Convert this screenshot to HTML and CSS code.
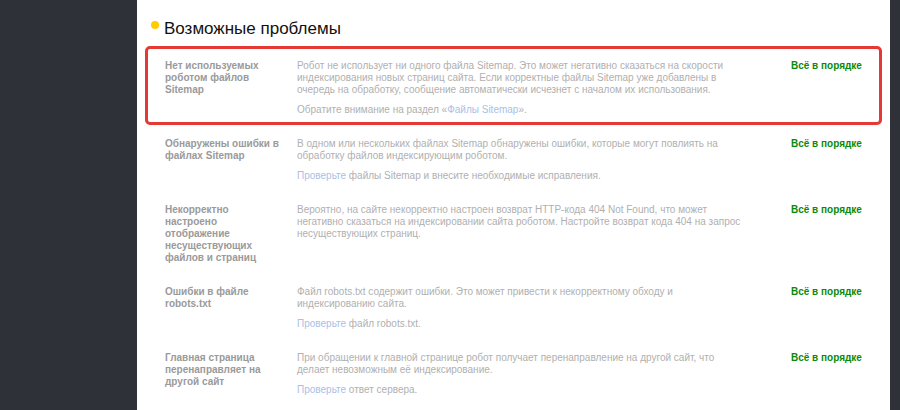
FILE: index.html
```html
<!DOCTYPE html>
<html lang="ru">
<head>
    <meta charset="UTF-8">
    <title>Возможные проблемы</title>
    <link rel="stylesheet" href="styles.css">
</head>
<body>
    <div class="page">
        <div class="panel">
            <h2 class="section-title"><span class="dot"></span>Возможные проблемы</h2>

            <div class="issues">
                <div class="issue issue-marked">
                    <div class="issue-name">Нет используемых роботом файлов Sitemap</div>
                    <div class="issue-text">
                        <p>Робот не использует ни одного файла Sitemap. Это может негативно сказаться на скорости индексирования новых страниц сайта. Если корректные файлы Sitemap уже добавлены в очередь на обработку, сообщение автоматически исчезнет с началом их использования.</p>
                        <p>Обратите внимание на раздел «<a href="#">Файлы Sitemap</a>».</p>
                    </div>
                    <div class="issue-status">Всё в порядке</div>
                </div>

                <div class="issue">
                    <div class="issue-name">Обнаружены ошибки в файлах Sitemap</div>
                    <div class="issue-text">
                        <p>В одном или нескольких файлах Sitemap обнаружены ошибки, которые могут повлиять на обработку файлов индексирующим роботом.</p>
                        <p><a href="#">Проверьте</a> файлы Sitemap и внесите необходимые исправления.</p>
                    </div>
                    <div class="issue-status">Всё в порядке</div>
                </div>

                <div class="issue">
                    <div class="issue-name">Некорректно настроено отображение несуществующих файлов и страниц</div>
                    <div class="issue-text">
                        <p>Вероятно, на сайте некорректно настроен возврат HTTP-кода 404 Not Found, что может негативно сказаться на индексировании сайта роботом. Настройте возврат кода 404 на запрос несуществующих страниц.</p>
                    </div>
                    <div class="issue-status">Всё в порядке</div>
                </div>

                <div class="issue">
                    <div class="issue-name">Ошибки в файле robots.txt</div>
                    <div class="issue-text">
                        <p>Файл robots.txt содержит ошибки. Это может привести к некорректному обходу и индексированию сайта.</p>
                        <p><a href="#">Проверьте</a> файл robots.txt.</p>
                    </div>
                    <div class="issue-status">Всё в порядке</div>
                </div>

                <div class="issue">
                    <div class="issue-name">Главная страница перенаправляет на другой сайт</div>
                    <div class="issue-text">
                        <p>При обращении к главной странице робот получает перенаправление на другой сайт, что делает невозможным её индексирование.</p>
                        <p><a href="#">Проверьте</a> ответ сервера.</p>
                    </div>
                    <div class="issue-status">Всё в порядке</div>
                </div>
            </div>
        </div>
    </div>
</body>
</html>
```

FILE: styles.css
```css
body {
    margin: 0;
    background-color: #2e3238;
    font-family: 'Liberation Sans', Arial, sans-serif;
    overflow: hidden;
}

.page {
    display: flex;
    padding-left: 137px;
    padding-right: 14px;
    height: 410px;
}

.panel {
    flex: 1;
    background-color: #fff;
    padding: 0 8px;
}

.section-title {
    display: flex;
    align-items: flex-start;
    margin: 0;
    padding: 19px 0 0 6px;
    height: 27px;
    font-size: 17px;
    font-weight: normal;
    color: #111;
    line-height: 20px;
}

.dot {
    width: 8px;
    height: 8px;
    margin: 2px 5px 0 0;
    border-radius: 50%;
    background-color: #ffcc00;
}

.issue {
    display: flex;
    padding: 11px 20px;
    font-size: 10px;
    line-height: 12px;
}

.issue-marked {
    border: 3px solid #e53935;
    border-radius: 5px;
    padding: 11px 17px 6px;
    margin-bottom: 2px;
}

.issue-name {
    width: 115px;
    margin-right: 17px;
    font-weight: bold;
    color: #9a9a9a;
}

.issue-text {
    width: 446px;
    color: #b0b0b0;
}

.issue-text p {
    margin: 0 0 8px;
}

.issue-text p:last-child {
    margin-bottom: 0;
}

.issue-text a {
    color: #a9c0e6;
    text-decoration: none;
}

.issue-status {
    margin-left: 48px;
    font-weight: bold;
    color: #0a8a0a;
    white-space: nowrap;
}
```
